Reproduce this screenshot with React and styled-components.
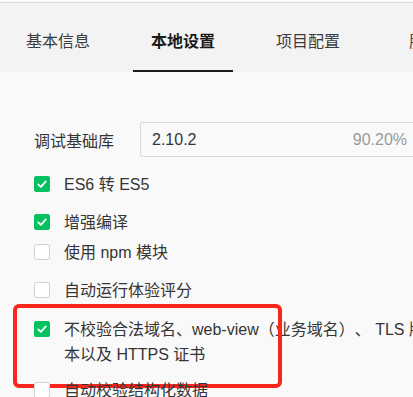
import React from "react";
import styled, { createGlobalStyle } from "styled-components";

const GlobalStyle = createGlobalStyle`
  html, body {
    margin: 0;
    padding: 0;
    overflow: hidden;
    background: #f9f9f9;
  }
  body {
    font-family: "Liberation Sans", "Noto Sans CJK SC", sans-serif;
    color: #353535;
    text-spacing-trim: space-all;
  }
`;

const Page = styled.div`
  width: 440px;
  padding-top: 2px;
`;

const TabBar = styled.div`
  display: flex;
  gap: 25px;
  height: 69px;
  padding-left: 8px;
  background: #f3f3f3;
  border-top: 1px solid #d8d8d8;
`;

const Tab = styled.div`
  flex: 0 0 100px;
  box-sizing: border-box;
  padding-top: 28px;
  text-align: center;
  font-size: 16px;
  line-height: 22px;
  white-space: nowrap;
  color: ${(p) => (p.$active ? "#1b1b1b" : "#3c3c3c")};
  font-weight: ${(p) => (p.$active ? 600 : 400)};
  border-bottom: 2px solid ${(p) => (p.$active ? "#1b1b1b" : "transparent")};
  height: 69px;
`;

const Content = styled.div`
  padding: 50px 0 0 34px;
`;

const SettingRow = styled.div`
  display: flex;
  align-items: center;
  height: 35px;
`;

const Label = styled.div`
  width: 106px;
  font-size: 16px;
  color: #353535;
`;

const Field = styled.div`
  box-sizing: border-box;
  width: 278px;
  height: 35px;
  display: flex;
  align-items: center;
  justify-content: space-between;
  padding: 0 10px 0 11px;
  border: 1px solid #d9d9d9;
  border-radius: 2px;
  font-size: 16px;
`;

const Version = styled.span`
  color: #353535;
`;

const Percent = styled.span`
  color: #9a9a9a;
`;

const CheckRow = styled.div`
  position: relative;
  display: flex;
  align-items: flex-start;
  gap: 14px;
  margin-top: ${(p) => p.$gap}px;
  font-size: 16px;
  line-height: 25px;
`;

const Box = styled.span`
  flex: 0 0 auto;
  box-sizing: border-box;
  width: 16px;
  height: 16px;
  margin-top: 4px;
  border-radius: 2px;
  display: flex;
  align-items: center;
  justify-content: center;
  background: ${(p) => (p.$checked ? "#07c160" : "#ffffff")};
  border: 1px solid ${(p) => (p.$checked ? "#07c160" : "#d2d2d2")};
`;

const CheckText = styled.span`
  width: 368px;
  color: #353535;
  text-spacing-trim: space-all;
`;

const Highlight = styled.div`
  position: absolute;
  left: -21px;
  top: -13px;
  width: 269px;
  height: 84px;
  box-sizing: border-box;
  border: 4px solid #f7271c;
  border-radius: 6px;
  pointer-events: none;
`;

const Checkbox = ({ checked }) => (
  <Box $checked={checked}>
    {checked && (
      <svg width="12" height="12" viewBox="0 0 12 12">
        <polyline
          points="2.2,6.3 4.9,8.9 9.8,3.4"
          fill="none"
          stroke="#fff"
          strokeWidth="1.7"
          strokeLinecap="round"
          strokeLinejoin="round"
        />
      </svg>
    )}
  </Box>
);

const items = [
  { text: "ES6 转 ES5", checked: true, gap: 15 },
  { text: "增强编译", checked: true, gap: 13 },
  { text: "使用 npm 模块", checked: false, gap: 5 },
  { text: "自动运行体验评分", checked: false, gap: 13 },
  {
    text: "不校验合法域名、web-view（业务域名）、 TLS 版本以及 HTTPS 证书",
    checked: true,
    gap: 14,
    marked: true,
  },
  { text: "自动校验结构化数据", checked: false, gap: 11 },
];

export default function App() {
  return (
    <>
      <GlobalStyle />
      <Page>
        <TabBar>
          <Tab>基本信息</Tab>
          <Tab $active>本地设置</Tab>
          <Tab>项目配置</Tab>
          <Tab>服务器</Tab>
        </TabBar>
        <Content>
          <SettingRow>
            <Label>调试基础库</Label>
            <Field>
              <Version>2.10.2</Version>
              <Percent>90.20%</Percent>
            </Field>
          </SettingRow>
          {items.map((it) => (
            <CheckRow key={it.text} $gap={it.gap}>
              <Checkbox checked={it.checked} />
              <CheckText>{it.text}</CheckText>
              {it.marked && <Highlight />}
            </CheckRow>
          ))}
        </Content>
      </Page>
    </>
  );
}
